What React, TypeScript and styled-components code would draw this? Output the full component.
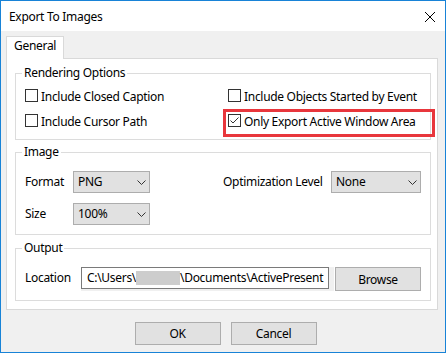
import React from "react";
import styled, { createGlobalStyle } from "styled-components";

const Global = createGlobalStyle`
  html, body { margin: 0; padding: 0; background: #ffffff; }
  body { font-family: "Noto Sans", "Open Sans", sans-serif; font-size: 12px; color: #000; }
  * { box-sizing: border-box; }
`;

const Window = styled.div`
  width: 446px;
  height: 353px;
  border: 1px solid #1883d7;
  background: #f0f0f0;
  display: flex;
  flex-direction: column;
  letter-spacing: -0.3px;
`;

const TitleBar = styled.div`
  height: 30px;
  flex: none;
  background: #ffffff;
  display: flex;
  align-items: center;
  justify-content: space-between;
  padding: 1px 10px 0 8px;
`;

const Title = styled.span`
  font-size: 12px;
  line-height: 16px;
`;

const CloseIcon = styled.svg`
  width: 10px;
  height: 10px;
  display: block;
`;

const Body = styled.div`
  padding: 5px 0 0 5px;
  display: flex;
  flex-direction: column;
`;

const TabStrip = styled.div`
  display: flex;
`;

const Tab = styled.div`
  height: 23px;
  margin-bottom: -1px;
  border: 1px solid #d9d9d9;
  border-bottom: none;
  background: #ffffff;
  padding: 1px 7px 0 7px;
  line-height: 16px;
  position: relative;
  z-index: 1;
`;

const Panel = styled.div`
  width: 432px;
  height: 252px;
  border: 1px solid #d9d9d9;
  background: #ffffff;
  padding: 6px 6px 8px 8px;
  display: flex;
  flex-direction: column;
`;

const Group = styled.fieldset<{ $top?: number }>`
  margin: ${(p) => p.$top ?? 0}px 0 0 0;
  padding: 0;
  border: 1px solid #dcdcdc;
  min-width: 0;
`;

const Legend = styled.legend`
  margin-left: 6px;
  padding: 0 2px;
  line-height: 16px;
  font-size: 12px;
`;

const CheckGrid = styled.div`
  display: grid;
  grid-template-columns: 203px 1fr;
  row-gap: 9px;
  padding: 7px 0 10px 9px;
`;

const CheckRow = styled.div`
  position: relative;
  display: flex;
  align-items: flex-start;
  height: 16px;
  white-space: nowrap;
`;

const CheckText = styled.span`
  line-height: 18px;
`;

const Box = styled.span`
  width: 13px;
  height: 13px;
  margin-top: 1px;
  margin-right: 3px;
  border: 1px solid #333333;
  background: #ffffff;
  flex: none;
  display: flex;
  align-items: center;
  justify-content: center;
`;

const Highlight = styled.div`
  position: absolute;
  left: -5px;
  top: -4px;
  width: 212px;
  height: 28px;
  border: 3px solid #e8363c;
  pointer-events: none;
`;

const FieldGrid = styled.div<{ $cols: string }>`
  display: grid;
  grid-template-columns: ${(p) => p.$cols};
  row-gap: 10px;
  align-items: center;
  padding: 11px 0 9px 9px;
`;

const FieldLabel = styled.span`
  line-height: 16px;
  white-space: nowrap;
`;

const Select = styled.div<{ $w: number }>`
  width: ${(p) => p.$w}px;
  height: 22px;
  border: 1px solid #adadad;
  background: #e1e1e1;
  display: flex;
  align-items: center;
  justify-content: space-between;
  padding: 0 3px 0 4px;
  line-height: 16px;
`;

const Chevron = styled.svg`
  width: 9px;
  height: 5px;
  display: block;
`;

const OutputRow = styled.div`
  display: flex;
  align-items: flex-start;
  padding: 11px 0 9px 9px;
`;

const OutputLabel = styled.span`
  width: 56px;
  line-height: 22px;
  flex: none;
`;

const InputWell = styled.div`
  width: 253px;
  height: 24px;
  background: #f0f0f0;
  flex: none;
`;

const TextInput = styled.div`
  width: 248px;
  height: 22px;
  border: 1px solid #7a7a7a;
  background: #ffffff;
  padding: 0 0 0 5px;
  line-height: 20px;
  white-space: nowrap;
  overflow: hidden;
`;

const Redacted = styled.span`
  display: inline-block;
  width: 44px;
  height: 14px;
  background: #cdcdcd;
  vertical-align: -3px;
`;

const Button = styled.button<{ $h?: number }>`
  width: 86px;
  height: ${(p) => p.$h ?? 23}px;
  border: 1px solid #adadad;
  background: #e1e1e1;
  font-family: inherit;
  font-size: 12px;
  letter-spacing: inherit;
  color: #000;
  padding: 0;
  flex: none;
`;

const BrowseButton = styled(Button)`
  margin-left: 1px;
`;

const ButtonRow = styled.div`
  display: flex;
  justify-content: center;
  gap: 10px;
  margin-top: 12px;
`;

function Check({ checked }: { checked?: boolean }) {
  return (
    <Box>
      {checked && (
        <svg width="11" height="11" viewBox="0 0 11 11">
          <polyline points="1.5,5.5 4,8 9.5,2.5" fill="none" stroke="#333" strokeWidth="1" />
        </svg>
      )}
    </Box>
  );
}

function Drop({ w, value }: { w: number; value: string }) {
  return (
    <Select $w={w}>
      <span>{value}</span>
      <Chevron viewBox="0 0 9 5">
        <polyline points="0.5,0.5 4.5,4.5 8.5,0.5" fill="none" stroke="#333" strokeWidth="1" />
      </Chevron>
    </Select>
  );
}

export default function App() {
  return (
    <>
      <Global />
      <Window>
        <TitleBar>
          <Title>Export To Images</Title>
          <CloseIcon viewBox="0 0 10 10">
            <path d="M0 0 L10 10 M10 0 L0 10" stroke="#000" strokeWidth="1" />
          </CloseIcon>
        </TitleBar>
        <Body>
          <TabStrip>
            <Tab>General</Tab>
          </TabStrip>
          <Panel>
            <Group>
              <Legend>Rendering Options</Legend>
              <CheckGrid>
                <CheckRow>
                  <Check />
                  <CheckText>Include Closed Caption</CheckText>
                </CheckRow>
                <CheckRow>
                  <Check />
                  <CheckText>Include Objects Started by Event</CheckText>
                </CheckRow>
                <CheckRow>
                  <Check />
                  <CheckText>Include Cursor Path</CheckText>
                </CheckRow>
                <CheckRow>
                  <Check checked />
                  <CheckText>Only Export Active Window Area</CheckText>
                  <Highlight />
                </CheckRow>
              </CheckGrid>
            </Group>
            <Group $top={4}>
              <Legend>Image</Legend>
              <FieldGrid $cols="48px 150px 108px 90px">
                <FieldLabel>Format</FieldLabel>
                <Drop w={77} value="PNG" />
                <FieldLabel>Optimization Level</FieldLabel>
                <Drop w={90} value="None" />
                <FieldLabel>Size</FieldLabel>
                <Drop w={77} value="100%" />
              </FieldGrid>
            </Group>
            <Group $top={5}>
              <Legend>Output</Legend>
              <OutputRow>
                <OutputLabel>Location</OutputLabel>
                <InputWell>
                  <TextInput>
                    C:\Users\<Redacted />\Documents\ActivePresent
                  </TextInput>
                </InputWell>
                <BrowseButton $h={24}>Browse</BrowseButton>
              </OutputRow>
            </Group>
          </Panel>
          <ButtonRow>
            <Button>OK</Button>
            <Button>Cancel</Button>
          </ButtonRow>
        </Body>
      </Window>
    </>
  );
}
